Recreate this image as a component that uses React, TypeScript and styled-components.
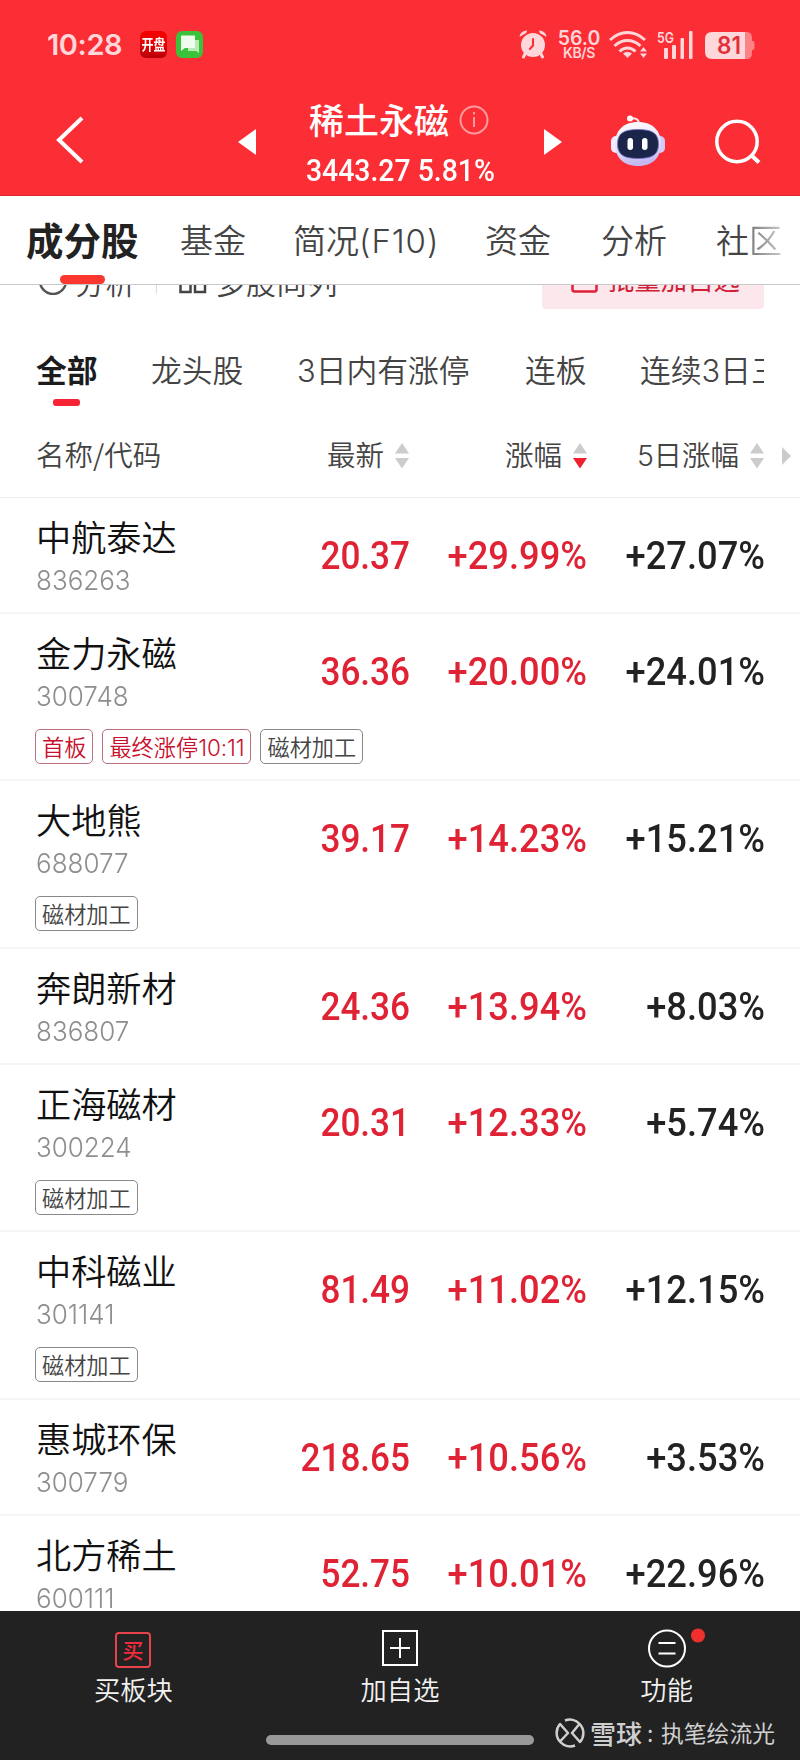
import React from 'react';
import styled, { createGlobalStyle } from 'styled-components';

const Global = createGlobalStyle`
  * { box-sizing: border-box; }
  body { margin: 0; background: #fff; font-family: Inter, "Noto Sans CJK SC", sans-serif; }
`;

const RED = '#fb2d35';
const PRICE = '#df2234';
const CJK = '"Noto Sans CJK SC", sans-serif';

const Screen = styled.div`
  width: 800px; height: 1760px; overflow: hidden;
  display: flex; flex-direction: column; background: #fff; white-space: nowrap;
`;

/* ---------- header ---------- */
const Header = styled.header`
  height: 196px; flex: none; background: ${RED}; border-bottom: 1px solid #d9272e; color: #fff;
`;
const StatusBar = styled.div`
  height: 89px; padding: 0 45px 0 47px; display: flex; align-items: center; color: #ffd6d9;
`;
const Clock = styled.span`
  width: 93px; font: 600 29px/30px Inter, sans-serif; letter-spacing: -0.4px;
`;
const AppBadge = styled.span`
  width: 27px; height: 27px; margin-right: 9px; border-radius: 6px; background: linear-gradient(#f20000 30%, #b80008);
  display: flex; justify-content: center; color: #fff; font: 700 12px/26px ${CJK};
`;
const BadgeText = styled.span`
  transform: scaleY(1.2);
`;
const StatusRight = styled.div`
  margin-left: auto; display: flex; align-items: center;
`;
const Speed = styled.div`
  width: 46px; margin: 0 7px 0 9px; display: flex; flex-direction: column; align-items: center;
  font: 600 19.5px/15px Inter, sans-serif;
`;
const SpeedUnit = styled.span`
  margin-top: 1px; font: 600 14px/11px Inter, sans-serif; letter-spacing: -0.4px;
`;
const NavBar = styled.div`
  height: 106px; display: grid; align-items: start;
  grid-template-columns: 237px 307px 63px 108px 85px;
`;
const NavSlot = styled.div<{ $top: number; $left?: number }>`
  display: flex; padding-top: ${p => p.$top}px; padding-left: ${p => p.$left ?? 0}px;
`;
const TitleGroup = styled.div`
  display: flex; align-items: flex-start;
`;
const PrevArrow = styled.i`
  margin: 40px 0 0 1px; border: solid transparent; border-width: 13px 18px 13px 0; border-right-color: #fff;
`;
const NextArrow = styled.i`
  margin-top: 40px; justify-self: start; border: solid transparent; border-width: 13px 0 13px 18px; border-left-color: #fff;
`;
const TitleBlock = styled.div`
  display: flex; flex-direction: column; padding-left: 53px;
`;
const Title = styled.div`
  margin-top: 8px; height: 44px; display: flex; align-items: center; gap: 10px;
  font: 500 35px/44px ${CJK};
  svg { margin-top: 2px; }
`;
const SubTitle = styled.div`
  height: 38px; margin-top: 11px; margin-left: -3px; width: 220px;
  font: 500 31px/38px Roboto, sans-serif; transform: scaleX(.915); transform-origin: left;
`;

/* ---------- tabs ---------- */
const Tabs = styled.nav`
  height: 89px; flex: none; display: flex; padding-left: 26px; border-bottom: 1px solid #c9c9c9; position: relative; z-index: 1;
  font: 350 33px/86px ${CJK}; color: #444;
`;
const Tab = styled.span<{ $w: number; $active?: boolean }>`
  width: ${p => p.$w}px; position: relative; flex: none;
  ${p => p.$active && 'font-size: 37.5px; font-weight: 700; color: #222;'}
`;
const TabLine = styled.i`
  position: absolute; left: 34px; top: 79px; width: 45px; height: 9px; border-radius: 5px; background: #fb3830;
`;
const Fade = styled.span`
  background: linear-gradient(90deg, #777, #ccc); background-clip: text; color: transparent;
`;
const Latin = styled.span<{ $track?: number }>`
  font-family: Inter, sans-serif; font-weight: 300; letter-spacing: ${p => p.$track ?? -0.5}px;
`;

/* ---------- scrolled tools strip ---------- */
const Tools = styled.div`
  height: 49px; flex: none; overflow: hidden; display: flex; align-items: flex-start; padding: 0 36px 0 39px;
  font: 350 30px/40px ${CJK}; color: #444;
`;
const ToolLabel = styled.span<{ $ml: number }>`
  margin: -24px 0 0 ${p => p.$ml}px; letter-spacing: 0.7px;
`;
const Rule = styled.i`
  width: 1px; height: 9px; margin: 0 22px 0 20px; background: #ddd;
`;
const BatchButton = styled.div`
  width: 222px; height: 60px; margin: -36px 0 0 auto; border-radius: 4px; background: #fce7ec; color: #d01f36;
  display: flex; align-items: center; gap: 10px; padding-left: 29px; font: 400 26.4px/60px ${CJK};
`;

/* ---------- filters ---------- */
const Filters = styled.div`
  height: 86px; flex: none; margin: 0 36px; overflow: hidden; display: flex; font: 350 30.8px/69px ${CJK}; color: #444;
`;
const Filter = styled.span<{ $w: number; $active?: boolean }>`
  width: ${p => p.$w}px; flex: none; position: relative;
  ${p => p.$active && 'font-weight: 700; color: #1c1c1c;'}
`;
const FilterLine = styled.i`
  position: absolute; left: 17px; top: 65px; width: 27px; height: 7px; border-radius: 3px; background: #f52333;
`;

/* ---------- table ---------- */
const HeadRow = styled.div`
  height: 78px; flex: none; border-bottom: 1px solid #ececec; padding: 0 9px 0 36px;
  display: grid; grid-template-columns: 200px 173px 178px 177px 1fr; align-items: center;
  font: 350 28.5px/68px ${CJK}; color: #444;
`;
const HeadCell = styled.div<{ $end?: boolean }>`
  display: flex; align-items: flex-start; height: 71px; align-self: start; gap: 11px;
  justify-content: ${p => (p.$end ? 'flex-end' : 'flex-start')};
  svg { align-self: center; }
`;
const List = styled.div`
  flex: 1; min-height: 0; overflow: hidden;
`;
const Row = styled.div<{ $tall: boolean }>`
  height: ${p => (p.$tall ? 167.7 : 115.6)}px; border-bottom: 2px solid #f5f5f5; padding: 0 36px 0 35px;
`;
const RowMain = styled.div`
  height: 115px; display: grid; grid-template-columns: 201px 173px 177px 178px; padding-left: 1px; width: 730px;
`;
const Name = styled.div`
  margin-top: 14px; font: 350 35.2px/48px ${CJK}; color: #111;
`;
const Code = styled.div`
  font: 350 27.5px/34px Inter, sans-serif; color: #8e8e8e; transform: scaleX(.945); transform-origin: left; margin-top: 3px;
`;
const Value = styled.div<{ $up?: boolean; $stretch?: number }>`
  font: 500 39px/117px Roboto, sans-serif; text-align: right; color: ${p => (p.$up ? PRICE : '#222')};
  transform: scaleX(${p => p.$stretch ?? 0.93}); transform-origin: right; display: flex; justify-content: flex-end;
`;
const Tags = styled.div`
  display: flex; gap: 9px;
`;
const Tag = styled.span<{ $red?: boolean }>`
  height: 35px; padding: 0 6px; border: 1px solid ${p => (p.$red ? '#b9707c' : '#888')}; border-radius: 5px;
  font: 350 22.2px/32px ${CJK}; color: ${p => (p.$red ? '#c8102e' : '#444')};
`;
const TagTime = styled.span`
  font: 350 22.5px/32px Inter, sans-serif; letter-spacing: -0.1px;
`;

/* ---------- bottom bar ---------- */
const Bottom = styled.footer`
  height: 149px; flex: none; background: #222; position: relative; color: #f2f2f2;
`;
const Actions = styled.div`
  display: grid; grid-template-columns: repeat(3, 1fr);
`;
const Action = styled.div`
  display: flex; flex-direction: column; align-items: center; padding-top: 18px; font: 350 26.3px/36px ${CJK}; gap: 2px;
`;
const HomeBar = styled.i`
  position: absolute; left: 266px; top: 124px; width: 268px; height: 10px; border-radius: 5px; background: #999;
`;
const Watermark = styled.div`
  position: absolute; left: 555px; top: 104px; height: 36px; display: flex; align-items: center;
  color: #cfcfcf; font: 400 22.8px/36px ${CJK};
`;
const Brand = styled.b`
  font-weight: 500; font-size: 26px; margin-left: 5px; width: 55px;
`;
const Colon = styled.span`
  width: 16px; padding-left: 2px;
`;

const Sort = ({ active }: { active?: boolean }) => (
  <svg width="14" height="26" viewBox="0 0 14 26">
    <path d="M7 0l7 10.500H0z" fill="#ccc" />
    <path d="M0 15h14l-7 10.500z" fill={active ? '#f02030' : '#ccc'} />
  </svg>
);

const Alarm = () => (
  <svg width="28" height="29" viewBox="0 0 28 29" fill="#ffd6d9">
    <circle cx="14" cy="15" r="12" />
    <path d="M.5 7Q1 1 8 .5q0 2-1.500 3Q3 5 .5 7zM27.500 7Q27 1 20 .5q0 2 1.500 3Q25 5 27.500 7z" />
    <path d="M6 24l-1.500 3M22 24l1.500 3" stroke="#ffd6d9" strokeWidth="3" strokeLinecap="round" />
    <path d="M14 9v6.500L10.800 19" stroke={RED} strokeWidth="2" fill="none" strokeLinecap="round" />
  </svg>
);

const Wifi = () => (
  <svg width="40" height="28" viewBox="0 0 40 28" fill="none" stroke="#ffd6d9" strokeWidth="3">
    <path d="M1 9q8-7.500 17.500-7.500T36 9M5.500 15q6-5.500 13-5.500t13 5.500M10.500 20.500q3.500-3.500 8-3.500t8 3.500" />
    <path d="M18.500 27l-4.500-4.500q4.500-3.500 9 0z" fill="#ffd6d9" stroke="none" />
    <path d="M31 20.500l3.500-4.500 3.500 4.500zM31 22.500l3.500 4.500 3.500-4.500z" fill="#ffd6d9" stroke="none" />
  </svg>
);

const Signal = () => (
  <svg width="38" height="28" viewBox="0 0 38 28" fill="#ffd6d9">
    <text x="0" y="11.500" fontFamily="Inter" fontWeight="600" fontSize="15" textLength="17" lengthAdjust="spacingAndGlyphs">5G</text>
    <rect x="7" y="17" width="4" height="11" rx="1" />
    <rect x="15" y="14" width="4" height="14" rx="1" />
    <rect x="23.500" y="7" width="3.500" height="21" rx="1" />
    <rect x="32" y="0" width="3.500" height="28" rx="1" />
  </svg>
);

const Battery = () => (
  <svg width="50" height="27" viewBox="0 0 50 27">
    <path d="M38 0h4q5 0 5 6v3h1q1.500 0 1.500 3v3q0 3-1.500 3h-1v3q0 6-5 6h-4z" fill="#fc8287" />
    <path d="M7 0h33v27H7q-7 0-7-7V7q0-7 7-7z" fill="#ffd6d9" />
    <text x="24" y="22" fontFamily="Inter" fontWeight="600" fontSize="24" textLength="24" lengthAdjust="spacingAndGlyphs" fill="#e0303a" textAnchor="middle">81</text>
  </svg>
);

const Messages = () => (
  <svg width="27" height="27" viewBox="0 0 27 27">
    <rect width="27" height="27" rx="6" fill="#3cc23a" />
    <path d="M12 9h11v13l-3-2h-8z" fill="#b6eab2" />
    <path d="M5 4.500h14V17H9l-4 3z" fill="#effcee" />
  </svg>
);

const Robot = () => (
  <svg width="56" height="52" viewBox="0 0 56 52">
    <defs>
      <linearGradient id="shell" x1="0" y1="0" x2=".2" y2="1">
        <stop offset="0" stopColor="#fff" /><stop offset=".6" stopColor="#e6e2fb" /><stop offset="1" stopColor="#c3b8f0" />
      </linearGradient>
    </defs>
    <path d="M20 3.500h5q4 1 4 6" stroke="#fbe4ee" strokeWidth="2" fill="none" />
    <circle cx="20" cy="3.500" r="3" fill="#fff" />
    <rect x="1" y="21" width="10" height="17" rx="5" fill="#f3eaff" />
    <rect x="45" y="21" width="10" height="17" rx="5" fill="#d4c9fb" />
    <path d="M28 7c15 0 23 9 23 22s-8 22-23 22S5 42 5 29 13 7 28 7z" fill="url(#shell)" />
    <path d="M28 14.500c13 0 20.500 3 20.500 14.500S41 43.500 28 43.500 7.500 40.500 7.500 29 15 14.500 28 14.500z" fill="#1b2449" stroke="#6a6fc0" strokeWidth=".8" />
    <rect x="17.500" y="23" width="5.500" height="12" rx="2.700" fill="#fff" />
    <rect x="32" y="23" width="5.500" height="12" rx="2.700" fill="#fff" />
  </svg>
);

interface StockTag { label: string; time?: string; red?: boolean }
interface Stock { name: string; code: string; price: string; chg: string; chg5: string; tags?: StockTag[] }

const magnet: StockTag = { label: '磁材加工' };
const stocks: Stock[] = [
  { name: '中航泰达', code: '836263', price: '20.37', chg: '+29.99%', chg5: '+27.07%' },
  { name: '金力永磁', code: '300748', price: '36.36', chg: '+20.00%', chg5: '+24.01%', tags: [{ label: '首板', red: true }, { label: '最终涨停', time: '10:11', red: true }, magnet] },
  { name: '大地熊', code: '688077', price: '39.17', chg: '+14.23%', chg5: '+15.21%', tags: [magnet] },
  { name: '奔朗新材', code: '836807', price: '24.36', chg: '+13.94%', chg5: '+8.03%' },
  { name: '正海磁材', code: '300224', price: '20.31', chg: '+12.33%', chg5: '+5.74%', tags: [magnet] },
  { name: '中科磁业', code: '301141', price: '81.49', chg: '+11.02%', chg5: '+12.15%', tags: [magnet] },
  { name: '惠城环保', code: '300779', price: '218.65', chg: '+10.56%', chg5: '+3.53%' },
  { name: '北方稀土', code: '600111', price: '52.75', chg: '+10.01%', chg5: '+22.96%' },
];

export default function App() {
  return (
    <Screen>
      <Global />
      <Header>
        <StatusBar>
          <Clock>10:28</Clock>
          <AppBadge><BadgeText>开盘</BadgeText></AppBadge>
          <Messages />
          <StatusRight>
            <Alarm />
            <Speed>56.0<SpeedUnit>KB/S</SpeedUnit></Speed>
            <Wifi />
            <NavSlot $top={0} $left={8}><Signal /></NavSlot>
            <NavSlot $top={1} $left={10}><Battery /></NavSlot>
          </StatusRight>
        </StatusBar>
        <NavBar>
          <NavSlot $top={27} $left={56}>
            <svg width="28" height="48" viewBox="0 0 28 48"><path d="M26 2L3 24l23 22" fill="none" stroke="#fff" strokeWidth="4" /></svg>
          </NavSlot>
          <TitleGroup>
            <PrevArrow />
            <TitleBlock>
              <Title>
                稀土永磁
                <svg width="30" height="30" viewBox="0 0 30 30" fill="none" stroke="#fd9a9e" strokeWidth="2">
                  <circle cx="15" cy="15" r="13.500" /><path d="M15 12v10M15 7v2.500" />
                </svg>
              </Title>
              <SubTitle>3443.27 5.81%</SubTitle>
            </TitleBlock>
          </TitleGroup>
          <NextArrow />
          <NavSlot $top={26} $left={3}><Robot /></NavSlot>
          <NavSlot $top={30}>
            <svg width="46" height="46" viewBox="0 0 46 46" fill="none" stroke="#fff" strokeWidth="3.500">
              <circle cx="22" cy="22.500" r="20.200" /><path d="M35.500 35.500l8.500 8" strokeWidth="4" />
            </svg>
          </NavSlot>
        </NavBar>
      </Header>

      <Tabs>
        <Tab $w={154} $active>成分股<TabLine /></Tab>
        <Tab $w={113}>基金</Tab>
        <Tab $w={192}>简况<Latin $track={0.9}>(F10)</Latin></Tab>
        <Tab $w={116}>资金</Tab>
        <Tab $w={115}>分析</Tab>
        <Tab $w={80}>社<Fade>区</Fade></Tab>
      </Tabs>

      <Tools>
        <svg width="30" height="10" viewBox="0 18 30 10"><circle cx="14" cy="14" r="13" fill="none" stroke="#555" strokeWidth="2.500" /></svg>
        <ToolLabel $ml={6}>分析</ToolLabel>
        <Rule />
        <svg width="28" height="10" viewBox="0 0 28 10" fill="none" stroke="#444" strokeWidth="2.500"><path d="M1.500-4v11h10v-11M16-4v11h10v-11" /></svg>
        <ToolLabel $ml={8}>多股同列</ToolLabel>
        <BatchButton>
          <svg width="27" height="27" viewBox="0 0 27 27" fill="none" stroke="#e0213a" strokeWidth="2.500"><rect x="1.500" y="1.500" width="24" height="24" rx="2" /><path d="M8 10h11M13.500 4v11" /></svg>
          批量加自选
        </BatchButton>
      </Tools>

      <Filters>
        <Filter $w={115} $active>全部<FilterLine /></Filter>
        <Filter $w={146}>龙头股</Filter>
        <Filter $w={228}><Latin $track={0}>3</Latin>日内有涨停</Filter>
        <Filter $w={115}>连板</Filter>
        <Filter $w={170}>连续<Latin $track={0}>3</Latin>日三</Filter>
      </Filters>

      <HeadRow>
        <HeadCell>名称/代码</HeadCell>
        <HeadCell $end>最新<Sort /></HeadCell>
        <HeadCell $end>涨幅<Sort active /></HeadCell>
        <HeadCell $end><span><Latin>5</Latin>日涨幅</span><Sort /></HeadCell>
        <HeadCell $end><svg width="10" height="18" viewBox="0 0 10 18"><path d="M1 0l9 9-9 9z" fill="#ccc" /></svg></HeadCell>
      </HeadRow>

      <List>
        {stocks.map(s => (
          <Row key={s.code} $tall={!!s.tags}>
            <RowMain>
              <div><Name>{s.name}</Name><Code>{s.code}</Code></div>
              <Value $up $stretch={0.9}>{s.price}</Value>
              <Value $up>{s.chg}</Value>
              <Value>{s.chg5}</Value>
            </RowMain>
            {s.tags && (
              <Tags>
                {s.tags.map(t => (
                  <Tag key={t.label} $red={t.red}>{t.label}{t.time && <TagTime>{t.time}</TagTime>}</Tag>
                ))}
              </Tags>
            )}
          </Row>
        ))}
      </List>

      <Bottom>
        <Actions>
          <Action>
            <svg width="38" height="40" viewBox="0 0 38 40"><rect x="2" y="4" width="34" height="34" rx="3" fill="none" stroke="#e8434b" strokeWidth="2" /><text x="19" y="28.500" textAnchor="middle" fontFamily="Noto Sans CJK SC" fontWeight="500" fontSize="21" fill="#f02c3c">买</text></svg>
            买板块
          </Action>
          <Action>
            <svg width="38" height="40" viewBox="0 0 38 40" fill="none" stroke="#fff" strokeWidth="2"><path d="M2 2h34v34H2zM19 9v20M9 19h20" /></svg>
            加自选
          </Action>
          <Action>
            <svg width="38" height="40" viewBox="0 0 38 40" overflow="visible" fill="none" stroke="#fff" strokeWidth="2"><circle cx="19" cy="19.500" r="18" /><path d="M10.500 14h17M10.500 24.500h17" /><circle cx="50" cy="6.500" r="7" fill="#f0302f" stroke="none" /></svg>
            功能
          </Action>
        </Actions>
        <HomeBar />
        <Watermark>
          <svg width="30" height="30" viewBox="0 0 30 30" fill="none" stroke="#cfcfcf" strokeWidth="2.500">
            <path d="M10 2.500a13.300 13.300 0 0 1 14.500 3.300A13.300 13.300 0 0 1 25 24L17 15l7-8.500M20 27.500A13.300 13.300 0 0 1 5.500 24.200 13.300 13.300 0 0 1 5 6l8 9-7.500 8" strokeLinejoin="round" />
          </svg>
          <Brand>雪球</Brand><Colon>:</Colon>执笔绘流光
        </Watermark>
      </Bottom>
    </Screen>
  );
}
